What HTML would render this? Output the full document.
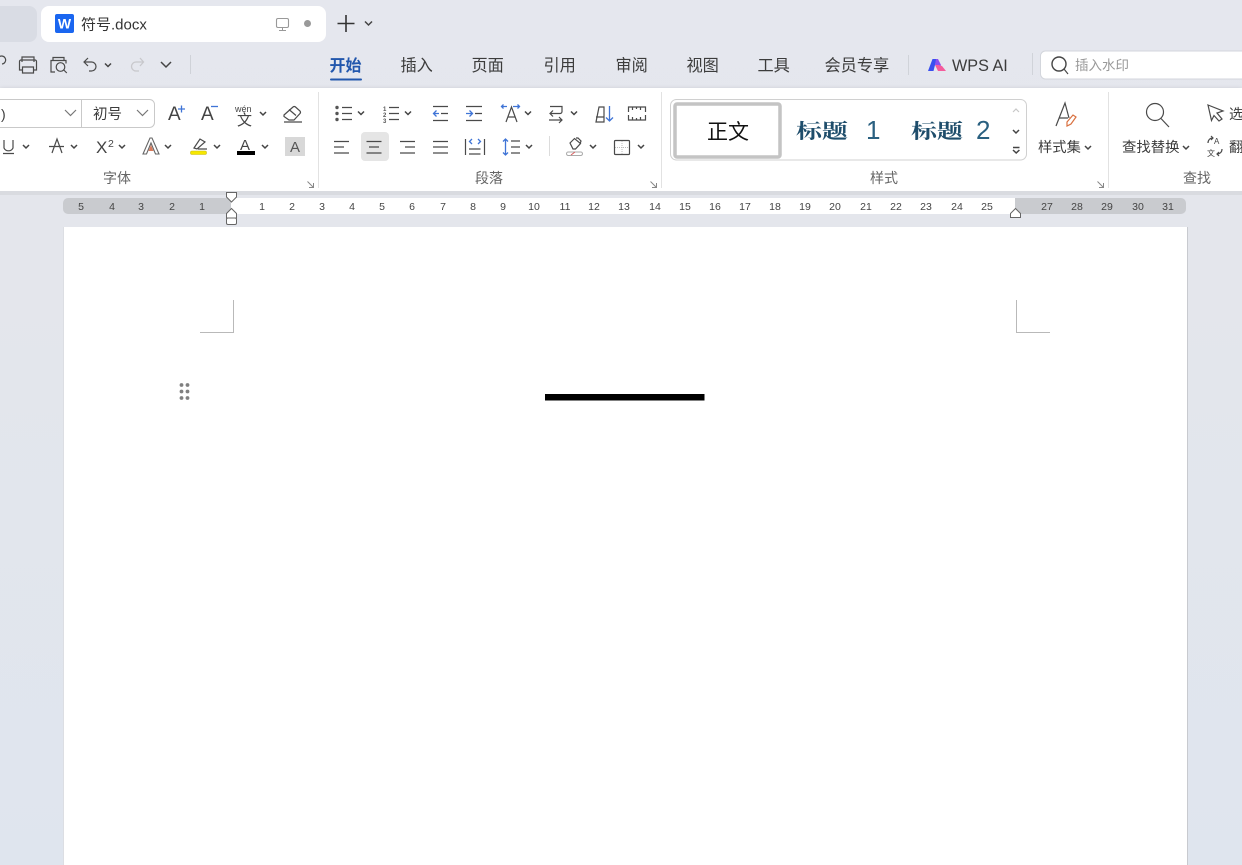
<!DOCTYPE html>
<html lang="zh">
<head>
<meta charset="utf-8">
<style>
html,body{margin:0;padding:0;width:1242px;height:865px;overflow:hidden;background:#e5e8ef}
svg{display:block;position:absolute;left:0;top:0}
text{font-family:"Liberation Sans","Noto Sans CJK SC",sans-serif;fill:#3c3c3c}
.i{fill:none;stroke:#4a4a4a;stroke-width:1.2}
.c{fill:none;stroke:#444;stroke-width:1.5}
.b{fill:none;stroke:#3f74d6;stroke-width:1.3}
.tab{font-size:16px;fill:#333}
.rn{font-size:10.500px;fill:#444;text-anchor:middle}
.lab{font-size:14px;fill:#666;text-anchor:middle}
</style>
</head>
<body>
<svg width="1242" height="865" viewBox="0 0 1242 865" xmlns="http://www.w3.org/2000/svg">
<defs>
<linearGradient id="bg" x1="0" y1="0" x2="0" y2="1"><stop offset="0" stop-color="#e5e7ee"/><stop offset="0.3" stop-color="#e4e6ec"/><stop offset="1" stop-color="#dfe5ee"/></linearGradient>
<filter id="sh" x="-5%" y="-5%" width="110%" height="120%"><feDropShadow dx="0" dy="1" stdDeviation="2" flood-color="#000" flood-opacity=".18"/></filter>
</defs>
<rect width="1242" height="865" fill="url(#bg)"/>
<!-- tabs -->
<path d="M0 6H29a8 8 0 0 1 8 8V34a8 8 0 0 1-8 8H0Z" fill="#d9dce4"/>
<rect x="41" y="6" width="285" height="36" rx="8" fill="#fff"/>
<rect x="55" y="14" width="19" height="19" rx="2" fill="#1a66f0"/>
<text x="64.500" y="28.500" text-anchor="middle" style="font-size:14px;font-weight:bold;fill:#fff">W</text>
<text x="81" y="29.500" class="tab" style="font-size:15px">符号.docx</text>
<rect x="276.500" y="18.500" width="12" height="9" rx="1.500" fill="none" stroke="#999" stroke-width="1.100"/><path d="M279 30.500h7M282.500 27.500v3" stroke="#999" fill="none"/>
<circle cx="307.500" cy="23.500" r="3.500" fill="#999"/>
<path d="M337.500 23.500h17M346 15v17" stroke="#333" stroke-width="1.600" fill="none"/>
<path d="M365 21.500l3.500 3.500 3.500-3.500" class="c"/>
<!-- QAT -->
<path d="M-1 57a4 4 0 1 1 3 7" class="i"/>
<path d="M22 62v-5h12v5M22 70h-2.500v-8.500a1.500 1.500 0 0 1 1.500-1.500h14a1.500 1.500 0 0 1 1.500 1.500V70H34M22.500 67h11v6h-11z" class="i"/>
<g class="i"><path d="M55 72h-4v-11.500h2v-3h11v3h2v3M53 60.500h11"/><circle cx="60.500" cy="67" r="4.300"/><path d="M63.800 70l3 3" /></g>
<path d="M88 58l-4 4 4 4M84 62h7.500a4.500 4.500 0 0 1 0 9H89" class="i"/>
<path d="M105 63.500l3 3 3-3" class="c"/>
<path d="M140 58l3.500 4-3.500 4M143 62h-7a4.500 4.500 0 0 0 0 9h3" fill="none" stroke="#c8c8cc" stroke-width="1.300"/>
<path d="M161 62l5 5 5-5" class="c"/>
<path d="M190.500 55v19" stroke="#cfd2d8"/>
<!-- menu -->
<text x="329.500" y="71" style="font-size:16px;font-weight:bold;fill:#2257ad">开始</text>
<text x="400.500" y="71" style="font-size:16.200px">插入</text>
<text x="471.500" y="71" style="font-size:16.200px">页面</text>
<text x="543.500" y="71" style="font-size:16.200px">引用</text>
<text x="615.500" y="71" style="font-size:16.200px">审阅</text>
<text x="686.500" y="71" style="font-size:16.200px">视图</text>
<text x="757.500" y="71" style="font-size:16.200px">工具</text>
<text x="824.500" y="71" style="font-size:16.200px">会员专享</text>
<text x="952" y="71" style="font-size:16.200px">WPS AI</text>
<rect x="330" y="78.500" width="32" height="2" rx="1" fill="#2257ad"/>
<path d="M908.500 55v20M1032.500 53v22" stroke="#d0d3d9"/>
<path d="M932.500 59h4l-3 12h-5.500z" fill="#3a4ff0"/><path d="M936 59h2l3 6-2 3-4-3z" fill="#8a4ff0"/><path d="M935 65h3.500l3.500 1 4 5h-8z" fill="#f45c9c"/>
<rect x="1040.500" y="51" width="215" height="28" rx="5" fill="#fff" stroke="#d3d6dc"/>
<circle cx="1059" cy="64" r="7" fill="none" stroke="#444" stroke-width="1.400"/><path d="M1064 69l4 5" class="i"/>
<text x="1075" y="70" style="font-size:13.500px;fill:#999">插入水印</text>
<!-- ribbon -->
<rect x="0" y="88" width="1242" height="103" fill="#fff" filter="url(#sh)"/>
<path d="M318.500 92v96M661.500 92v96M1108.500 92v96" stroke="#e2e2e2"/>
<!-- font row 1 -->
<rect x="-8" y="99.500" width="162.500" height="28" rx="5" fill="#fff" stroke="#c9c9c9"/>
<path d="M81.500 100v27" stroke="#c9c9c9"/>
<text x="1" y="119" style="font-size:14px">)</text>
<path d="M65 110l5.500 5.500 5.500-5.500M137 110l5.500 5.500 5.500-5.500" fill="none" stroke="#777" stroke-width="1.200"/>
<text x="93" y="119" style="font-size:14.500px">初号</text>
<text x="168" y="120" style="font-size:19px;fill:#444">A</text>
<path d="M178 109h7M181.500 105.500v7" stroke="#3f74d6" stroke-width="1.300"/>
<text x="201" y="120" style="font-size:19px;fill:#444">A</text>
<path d="M211 106.500h7" stroke="#3f74d6" stroke-width="1.300"/>
<text x="235" y="112" style="font-size:9px;fill:#444">wén</text>
<text x="237" y="125" style="font-size:15px;fill:#444">文</text>
<path d="M260 112l3 3 3-3" class="c"/>
<path d="M284 115l9-8a2 2 0 0 1 2.500 0l4.500 4a2 2 0 0 1 0 2.500l-6 6.500h-5l-5-3.500zM289 109.500l7 6" class="i"/>
<path d="M284 122h18" class="i"/>
<!-- font row 2 -->
<path d="M4 140v8a5 5 0 0 0 9 0v-8M3 153.500h11" class="i"/>
<path d="M23 145l3 3 3-3M71 145l3 3 3-3M119 145l3 3 3-3M165 145l3 3 3-3M214 145l3 3 3-3M262 145l3 3 3-3" class="c"/>
<path d="M49 146.500h15M52 153l5-14 5 14" class="i"/>
<text x="96" y="153" style="font-size:17px;fill:#444">X</text><text x="108" y="147" style="font-size:10.500px;fill:#444">2</text>
<path d="M143 154l7-16h2l7 16h-3.500l-4.500-11-4.500 11z" fill="#fff" stroke="#666" stroke-width="1.100"/><path d="M148.500 151l2.500-6 2.500 6z" fill="#d97a5b"/>
<path d="M194 148l6-9 5 3-8 7zM198 149h9" class="i"/>
<rect x="190.500" y="151" width="16" height="3.500" rx="1.500" fill="#f6e700" stroke="#c8bb10" stroke-width=".6"/>
<text x="240" y="150" style="font-size:15px;fill:#444">A</text>
<rect x="237" y="151" width="18" height="4" fill="#000"/>
<rect x="285" y="137" width="20" height="19" fill="#d8d8d8"/>
<text x="295" y="152" text-anchor="middle" style="font-size:15px;fill:#555">A</text>
<text x="117" y="183" class="lab">字体</text>
<path d="M307.500 181.500l6 6M313.500 183v4.500h-4.500" fill="none" stroke="#888"/>
<!-- paragraph row 1 -->
<g fill="#555"><circle cx="337" cy="107.500" r="1.700"/><circle cx="337" cy="113.500" r="1.700"/><circle cx="337" cy="119.500" r="1.700"/></g>
<path d="M342 107.500h10M342 113.500h10M342 119.500h10" class="i"/>
<path d="M358 111.500l3 3 3-3M405 111.500l3 3 3-3M525 111.500l3 3 3-3M571 111.500l3 3 3-3" class="c"/>
<text x="383" y="111" style="font-size:6px;font-weight:bold;fill:#555">1</text><text x="383" y="117" style="font-size:6px;font-weight:bold;fill:#555">2</text><text x="383" y="123" style="font-size:6px;font-weight:bold;fill:#555">3</text>
<path d="M389 107.500h10M389 113.500h10M389 119.500h10" class="i"/>
<path d="M433 106.500h15M441 113.500h7M433 120.500h15" class="i"/><path d="M439 113.500h-5.500M436.500 110.500l-3 3 3 3" class="b"/>
<path d="M466 106.500h16M475 113.500h7M466 120.500h16" class="i"/><path d="M466 113.500h6M469.500 110.500l3 3-3 3" class="b"/>
<path d="M506 122l5.500-15 5.500 15M508 117h7" class="i"/><path d="M502 106.500h5M503.500 104.500l-2 2 2 2M513 106.500h6M517.500 104.500l2 2-2 2" class="b"/>
<path d="M550 106.500h12v5a2 2 0 0 1-2 2h-10M553 110.500l-3 3 3 3M549 120h13M559 117l3 3-3 3" class="i"/>
<path d="M596 122l3-15h5v15zM596 117h8" class="i"/><path d="M609.500 106v15M606 117.500l3.500 3.500 3.500-3.500" class="b"/>
<path d="M628.500 112v-5h17v5M628.500 115v5h17v-5M632.500 107v3M636.500 107v2M640.500 107v3M632.500 120v-3M636.500 120v-2M640.500 120v-3" class="i"/>
<!-- paragraph row 2 -->
<rect x="361" y="132" width="28" height="29" rx="4" fill="#e5e5e5"/>
<path d="M334 141.500h15M334 147h10M334 153h15" class="i"/>
<path d="M366.500 141.500h15M369 147h10M366.500 153h15" class="i"/>
<path d="M400 141.500h15M405 147h10M400 153h15" class="i"/>
<path d="M433 141.500h15M433 147h15M433 153h15" class="i"/>
<path d="M465.500 139v16M484.500 139v16M469 149h11.500M469 154h11.500" class="i"/><path d="M472 139l-2.500 2.500 2.500 2.500M478 139l2.500 2.500-2.500 2.500" class="b"/>
<path d="M505.500 139v16M503 141.500l2.500-2.500 2.500 2.500M503 152.500l2.500 2.500 2.500-2.500" class="b"/><path d="M511 141h9M511 147h9M511 153h9" class="i"/>
<path d="M526 145l3 3 3-3M590 145l3 3 3-3M638 145l3 3 3-3" class="c"/>
<path d="M549.500 136v20" stroke="#dcdcdc"/>
<path d="M570 143l4.500-4.500 6 5-5 5.500h-2.500zM576 138l2 0 3 3-1 3" class="i"/>
<rect x="566.500" y="152" width="16" height="3.500" rx="1.700" fill="#fff" stroke="#aaa"/><path d="M571 155l4-3" stroke="#d86060"/>
<rect x="614.500" y="140.500" width="15" height="14" rx="1" class="i"/><path d="M622 141v13M615 147.500h14" stroke="#bbb" stroke-dasharray="1 1" fill="none"/>
<text x="489" y="183" class="lab">段落</text>
<path d="M650.500 181.500l6 6M656.500 183v4.500h-4.500" fill="none" stroke="#888"/>
<!-- styles -->
<rect x="670.500" y="99.500" width="356" height="60.500" rx="6" fill="#fff" stroke="#d0d0d0"/>
<rect x="675" y="104" width="105" height="53" rx="2" fill="#fff" stroke="#c4c4c4" stroke-width="3.500"/>
<text x="728" y="139" text-anchor="middle" style="font-size:21px;fill:#111">正文</text>
<text transform="translate(796 138) scale(1.300 1)" style="font-family:'Liberation Serif','Noto Serif CJK SC',serif;font-size:20px;font-weight:bold;fill:#1e4d6b">标题</text>
<text x="866" y="139" style="font-size:26px;fill:#2a6080;font-weight:normal">1</text>
<text transform="translate(911 138) scale(1.300 1)" style="font-family:'Liberation Serif','Noto Serif CJK SC',serif;font-size:20px;font-weight:bold;fill:#1e4d6b">标题</text>
<text x="976" y="139" style="font-size:26px;fill:#2a6080;font-weight:normal">2</text>
<path d="M1013 112l3-3 3 3" fill="none" stroke="#c8c8c8" stroke-width="1.200"/>
<path d="M1013 130l3 3 3-3" class="c"/>
<path d="M1013 147.500h6.500M1013 150l3.200 3 3.200-3" class="c"/>
<text x="884" y="183" class="lab">样式</text>
<path d="M1097.500 181.500l6 6M1103.500 183v4.500h-4.500" fill="none" stroke="#888"/>
<path d="M1056 126l9-23 4 15M1059 118h9" class="i"/>
<path d="M1067 122l6-7 3 2-5 7-4 2z" fill="none" stroke="#d9703f" stroke-width="1.200"/>
<text x="1038" y="152" style="font-size:14.300px">样式集</text>
<path d="M1085 146l3 3 3-3" class="c"/>
<!-- find -->
<circle cx="1155" cy="112" r="8.500" class="i"/><path d="M1161 118.500l8 8.500" class="i"/>
<text x="1122" y="152" style="font-size:14.400px">查找替换</text>
<path d="M1183 146l3 3 3-3" class="c"/>
<path d="M1208 105l15 6-6 2 5 6-3 2-5-5.500-2.500 5z" class="i"/>
<text x="1229" y="119" style="font-size:14.300px">选</text>
<text x="1214" y="144" style="font-size:8px;fill:#444">A</text><text x="1207" y="156" style="font-size:8px;fill:#444">文</text>
<path d="M1208 143c0-3 2-5 5-5M1211 136l2 2-2 2M1222 149c0 3-2 5-5 5M1219 156l-2-2 2-2" class="i"/>
<text x="1229" y="152" style="font-size:14.300px">翻</text>
<text x="1197" y="183" class="lab">查找</text>
<!-- ruler -->
<rect x="0" y="192" width="1242" height="35" fill="#e4e6ec"/>
<rect x="0" y="191" width="1242" height="4" fill="#d9dbe0"/>
<rect x="63" y="198" width="1123" height="16" rx="5" fill="#c9cbcf"/>
<rect x="231" y="198" width="784" height="16" fill="#fff"/>
<text class="rn" x="81" y="210">5</text><text class="rn" x="112" y="210">4</text><text class="rn" x="141" y="210">3</text><text class="rn" x="172" y="210">2</text><text class="rn" x="202" y="210">1</text>
<text class="rn" x="262" y="210">1</text><text class="rn" x="292" y="210">2</text><text class="rn" x="322" y="210">3</text><text class="rn" x="352" y="210">4</text><text class="rn" x="382" y="210">5</text><text class="rn" x="412" y="210">6</text><text class="rn" x="443" y="210">7</text><text class="rn" x="473" y="210">8</text><text class="rn" x="503" y="210">9</text><text class="rn" x="534" y="210">10</text><text class="rn" x="565" y="210">11</text><text class="rn" x="594" y="210">12</text><text class="rn" x="624" y="210">13</text><text class="rn" x="655" y="210">14</text><text class="rn" x="685" y="210">15</text><text class="rn" x="715" y="210">16</text><text class="rn" x="745" y="210">17</text><text class="rn" x="775" y="210">18</text><text class="rn" x="805" y="210">19</text><text class="rn" x="835" y="210">20</text><text class="rn" x="866" y="210">21</text><text class="rn" x="896" y="210">22</text><text class="rn" x="926" y="210">23</text><text class="rn" x="957" y="210">24</text><text class="rn" x="987" y="210">25</text><text class="rn" x="1047" y="210">27</text><text class="rn" x="1077" y="210">28</text><text class="rn" x="1107" y="210">29</text><text class="rn" x="1138" y="210">30</text><text class="rn" x="1168" y="210">31</text>
<path d="M226.500 192.500h10v4.500l-5 5-5-5z" fill="#fff" stroke="#666"/>
<path d="M226.500 218v-4.500l5-5 5 5v4.500z" fill="#fff" stroke="#666"/>
<rect x="226.500" y="218" width="10" height="6.500" rx="1.500" fill="#fff" stroke="#666"/>
<path d="M1010.500 217.500v-4l5-5 5 5v4z" fill="#fff" stroke="#666"/>
<!-- page -->
<rect x="64" y="227" width="1123" height="638" fill="#fff"/>
<path d="M1187.500 227v638" stroke="#c8cacf"/>
<path d="M63.500 227v638" stroke="#dcdee3"/>
<path d="M233.500 300v32.500H200M1016.500 300v32.500H1050" fill="none" stroke="#b9b9b9"/>
<g fill="#808080"><circle cx="181.500" cy="385" r="1.900"/><circle cx="187.500" cy="385" r="1.900"/><circle cx="181.500" cy="391.500" r="1.900"/><circle cx="187.500" cy="391.500" r="1.900"/><circle cx="181.500" cy="398" r="1.900"/><circle cx="187.500" cy="398" r="1.900"/></g>
<rect x="545" y="394" width="159.500" height="6.500" fill="#000"/>
</svg>
</body>
</html>
